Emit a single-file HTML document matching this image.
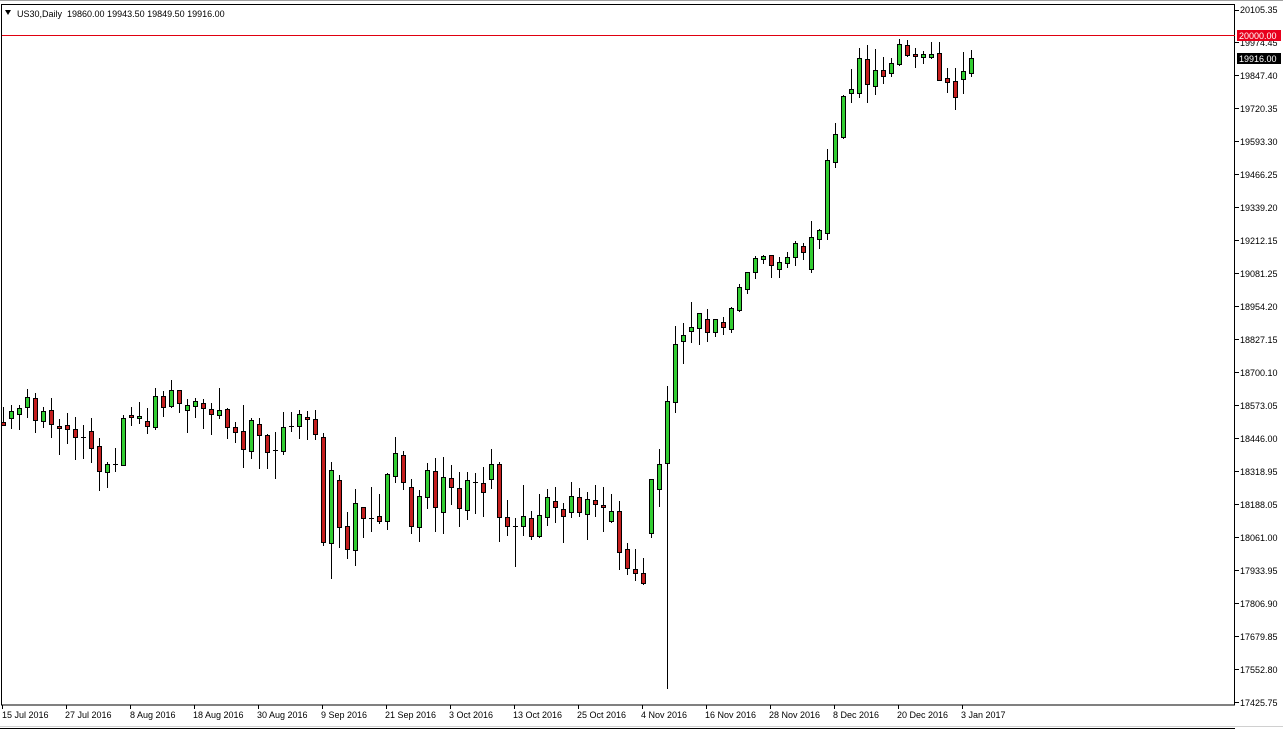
<!DOCTYPE html>
<html><head><meta charset="utf-8"><style>
html,body{margin:0;padding:0;background:#fff;width:1283px;height:730px;overflow:hidden}
svg{display:block}
text{font-family:"Liberation Sans",sans-serif;font-size:9px;fill:#000}
</style></head><body>
<svg width="1283" height="730" viewBox="0 0 1283 730" xmlns="http://www.w3.org/2000/svg">
<rect x="0" y="0" width="1283" height="730" fill="#fff"/>
<line x1="0" y1="0.5" x2="1283" y2="0.5" stroke="#a0a0a0"/>
<rect x="1.5" y="4.5" width="1233" height="700.5" fill="none" stroke="#000"/>
<line x1="0" y1="726.5" x2="1283" y2="726.5" stroke="#d0d0d0"/>
<line x1="0" y1="728.5" x2="1235" y2="728.5" stroke="#000"/>
<polygon points="5,10 11,10 8,15" fill="#000"/>
<text x="17" y="17" xml:space="preserve" style="white-space:pre">US30,Daily  19860.00 19943.50 19849.50 19916.00</text>
<line x1="2" y1="35.5" x2="1235" y2="35.5" stroke="#e00010"/>
<g id="axis" stroke="#000">
<line x1="1235" y1="10.5" x2="1239" y2="10.5"/><line x1="1235" y1="42.5" x2="1239" y2="42.5"/><line x1="1235" y1="75.5" x2="1239" y2="75.5"/><line x1="1235" y1="108.5" x2="1239" y2="108.5"/><line x1="1235" y1="141.5" x2="1239" y2="141.5"/><line x1="1235" y1="174.5" x2="1239" y2="174.5"/><line x1="1235" y1="207.5" x2="1239" y2="207.5"/><line x1="1235" y1="240.5" x2="1239" y2="240.5"/><line x1="1235" y1="273.5" x2="1239" y2="273.5"/><line x1="1235" y1="306.5" x2="1239" y2="306.5"/><line x1="1235" y1="339.5" x2="1239" y2="339.5"/><line x1="1235" y1="372.5" x2="1239" y2="372.5"/><line x1="1235" y1="405.5" x2="1239" y2="405.5"/><line x1="1235" y1="438.5" x2="1239" y2="438.5"/><line x1="1235" y1="471.5" x2="1239" y2="471.5"/><line x1="1235" y1="504.5" x2="1239" y2="504.5"/><line x1="1235" y1="537.5" x2="1239" y2="537.5"/><line x1="1235" y1="570.5" x2="1239" y2="570.5"/><line x1="1235" y1="603.5" x2="1239" y2="603.5"/><line x1="1235" y1="636.5" x2="1239" y2="636.5"/><line x1="1235" y1="669.5" x2="1239" y2="669.5"/><line x1="1235" y1="702.5" x2="1239" y2="702.5"/>
</g>
<g>
<text x="1240" y="13">20105.35</text><text x="1240" y="46">19974.45</text><text x="1240" y="79">19847.40</text><text x="1240" y="112">19720.35</text><text x="1240" y="145">19593.30</text><text x="1240" y="178">19466.25</text><text x="1240" y="211">19339.20</text><text x="1240" y="244">19212.15</text><text x="1240" y="277">19081.25</text><text x="1240" y="310">18954.20</text><text x="1240" y="343">18827.15</text><text x="1240" y="376">18700.10</text><text x="1240" y="409">18573.05</text><text x="1240" y="442">18446.00</text><text x="1240" y="475">18318.95</text><text x="1240" y="508">18188.05</text><text x="1240" y="541">18061.00</text><text x="1240" y="574">17933.95</text><text x="1240" y="607">17806.90</text><text x="1240" y="640">17679.85</text><text x="1240" y="673">17552.80</text><text x="1240" y="706">17425.75</text>
</g>
<rect x="1237" y="30" width="44" height="11" fill="#e8001c"/>
<text x="1239" y="39" style="fill:#fff">20000.00</text>
<rect x="1237" y="53" width="44" height="11" fill="#000"/>
<text x="1239" y="62" style="fill:#fff">19916.00</text>
<g stroke="#000">
<line x1="2.5" y1="705" x2="2.5" y2="709"/><line x1="66.5" y1="705" x2="66.5" y2="709"/><line x1="130.5" y1="705" x2="130.5" y2="709"/><line x1="194.5" y1="705" x2="194.5" y2="709"/><line x1="258.5" y1="705" x2="258.5" y2="709"/><line x1="322.5" y1="705" x2="322.5" y2="709"/><line x1="386.5" y1="705" x2="386.5" y2="709"/><line x1="450.5" y1="705" x2="450.5" y2="709"/><line x1="514.5" y1="705" x2="514.5" y2="709"/><line x1="578.5" y1="705" x2="578.5" y2="709"/><line x1="642.5" y1="705" x2="642.5" y2="709"/><line x1="706.5" y1="705" x2="706.5" y2="709"/><line x1="770.5" y1="705" x2="770.5" y2="709"/><line x1="834.5" y1="705" x2="834.5" y2="709"/><line x1="898.5" y1="705" x2="898.5" y2="709"/><line x1="962.5" y1="705" x2="962.5" y2="709"/>
</g>
<g>
<text x="2" y="718">15 Jul 2016</text><text x="65" y="718">27 Jul 2016</text><text x="130" y="718">8 Aug 2016</text><text x="193" y="718">18 Aug 2016</text><text x="257" y="718">30 Aug 2016</text><text x="321" y="718">9 Sep 2016</text><text x="385" y="718">21 Sep 2016</text><text x="449" y="718">3 Oct 2016</text><text x="513" y="718">13 Oct 2016</text><text x="577" y="718">25 Oct 2016</text><text x="641" y="718">4 Nov 2016</text><text x="705" y="718">16 Nov 2016</text><text x="769" y="718">28 Nov 2016</text><text x="833" y="718">8 Dec 2016</text><text x="897" y="718">20 Dec 2016</text><text x="961" y="718">3 Jan 2017</text>
</g>
<g id="c"></g>
<script>
var D=[
"r 407 424 422 425","g 405 428 411 418","g 405 429 408 414","g 389 417 397 407","r 393 432 398 420","g 407 427 411 421","r 398 437 410 424","r 419 454 426 428","r 413 443 425 429","r 417 459 429 437",
"d 425 458 437 437","r 418 462 431 448","r 438 490 446 471","g 462 487 464 472","d 448 471 464 464","g 415 465 418 465","r 407 425 415 417","g 402 423 416 418","r 408 433 421 426","g 388 429 396 427",
"r 391 416 396 407","g 380 407 390 406","r 390 412 390 403","g 399 432 405 410","g 398 417 401 406","r 399 428 403 408","r 403 434 409 414","g 388 418 410 415","r 408 438 409 427","r 422 442 427 432",
"r 405 467 431 449","g 418 458 420 451","r 418 468 424 435","r 434 468 435 452","d 432 478 450 450","g 412 454 427 451","d 412 431 426 426","g 410 438 414 426","r 411 439 417 419","r 410 439 419 434",
"r 433 545 437 542","g 462 578 470 543","r 475 547 480 527","r 512 558 526 549","g 489 565 503 550","r 507 537 507 518","d 487 531 518 518","r 494 523 516 521","g 473 529 474 521","g 437 482 453 476",
"r 451 489 455 482","r 479 533 487 526","g 490 541 496 527","g 463 508 470 497","r 458 531 471 507","g 457 533 477 512","r 465 504 478 487","r 472 526 488 508","g 472 519 480 510","d 473 513 482 482",
"r 467 516 483 492","g 449 488 464 479","r 462 541 464 517","r 500 535 517 526","d 518 566 526 526","g 485 535 516 526","r 511 539 518 536","g 494 537 515 536","g 489 525 497 517","r 487 522 501 507",
"r 503 542 509 516","g 482 517 496 512","r 488 516 497 512","g 492 539 499 514","r 485 516 500 504","r 487 531 505 507","g 494 522 511 521","r 501 569 511 552","r 543 574 549 568","r 549 580 569 573",
"r 558 584 573 583","g 479 537 479 533","g 449 506 464 489","g 386 688 401 463","g 326 412 344 402","g 323 363 335 341","g 302 342 327 331","g 313 344 313 328","r 309 341 319 332","g 319 336 319 332",
"r 317 334 322 327","g 307 332 308 329","g 284 311 287 310","g 272 293 272 289","g 256 278 258 272","g 255 263 256 259","r 255 277 255 265","g 257 277 262 269","g 252 267 257 263","g 241 265 243 257",
"r 243 259 246 252","g 221 272 237 269","g 229 248 230 239","g 149 239 160 233","g 123 167 134 162","g 95 138 96 137","g 69 102 89 93","g 48 97 58 93","r 45 102 59 84","g 49 94 70 86",
"r 57 83 70 76","g 58 76 63 73","g 39 65 44 64","r 40 56 45 55","r 48 67 54 56","g 51 63 54 57","g 42 58 54 57","r 42 80 53 80","r 68 92 78 82","r 68 109 81 97",
"g 52 93 71 79","g 50 76 58 73"];
var ns="http://www.w3.org/2000/svg",g=document.getElementById("c");
function el(n,a){var e=document.createElementNS(ns,n);for(var k in a)e.setAttribute(k,a[k]);g.appendChild(e);}
D.forEach(function(s,k){var p=s.split(" "),c=p[0],wt=+p[1],wb=+p[2],bt=+p[3],bb=+p[4],cx=3+8*k;
el("line",{x1:cx+0.5,x2:cx+0.5,y1:wt,y2:wb+1,stroke:"#000"});
if(c=="d"||bb-bt<1){el("line",{x1:cx-2,x2:cx+3,y1:bt+0.5,y2:bt+0.5,stroke:"#000"});}
else el("rect",{x:cx-1.5,y:bt+0.5,width:4,height:bb-bt,fill:c=="g"?"#32cd32":"#c41e1e",stroke:"#000"});
});
</script>
</svg>
</body></html>
